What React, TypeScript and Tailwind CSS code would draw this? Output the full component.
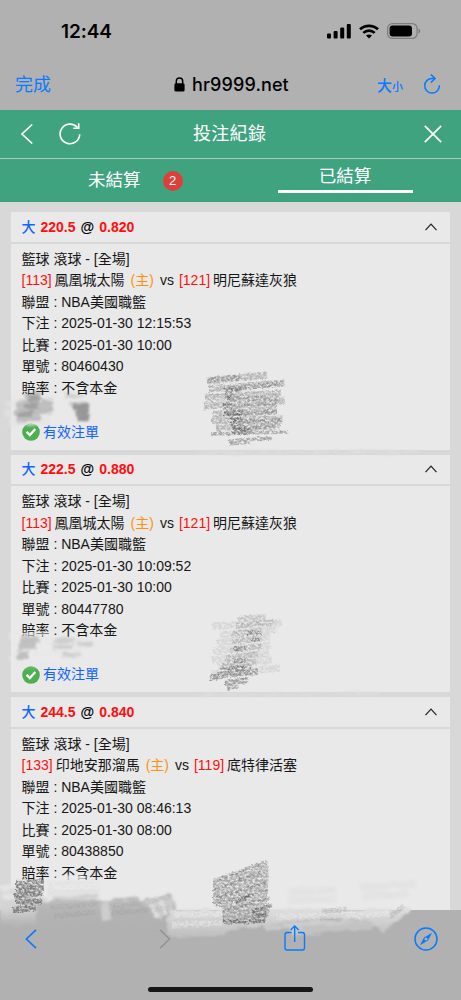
import React from "react";

const bets = [
  {
    line: "220.5",
    odds: "0.820",
    homeNo: "[113]",
    home: "鳳凰城太陽",
    awayNo: "[121]",
    away: "明尼蘇達灰狼",
    placed: "2025-01-30 12:15:53",
    start: "2025-01-30 10:00",
    ticket: "80460430",
    status: "有效注單",
  },
  {
    line: "222.5",
    odds: "0.880",
    homeNo: "[113]",
    home: "鳳凰城太陽",
    awayNo: "[121]",
    away: "明尼蘇達灰狼",
    placed: "2025-01-30 10:09:52",
    start: "2025-01-30 10:00",
    ticket: "80447780",
    status: "有效注單",
  },
  {
    line: "244.5",
    odds: "0.840",
    homeNo: "[133]",
    home: "印地安那溜馬",
    awayNo: "[119]",
    away: "底特律活塞",
    placed: "2025-01-30 08:46:13",
    start: "2025-01-30 08:00",
    ticket: "80438850",
    status: "",
  },
];

function StatusBar() {
  return (
    <div className="flex h-[62px] items-center justify-between pl-[61px] pr-[40px] font-['Inter','Liberation_Sans',sans-serif]">
      <span className="text-[19px] font-semibold leading-none tracking-[-0.1px]">12:44</span>
      <div className="flex items-center gap-2">
        <svg width="24" height="15" viewBox="0 0 24 15">
          <rect x="0" y="9.5" width="4" height="5" rx="1" />
          <rect x="6.6" y="7" width="4" height="7.5" rx="1" />
          <rect x="13.2" y="3.5" width="4" height="11" rx="1" />
          <rect x="19.8" y="0" width="4" height="14.5" rx="1" />
        </svg>
        <svg width="20" height="15" viewBox="0 0 20 15" fill="none" stroke="black">
          <path d="M1 5.3C6 .6 14 .6 19 5.3" strokeWidth="2.7" />
          <path d="M4.3 8.9C7.6 5.8 12.4 5.8 15.7 8.9" strokeWidth="2.6" />
          <path d="M10 14.6L7 11.6C8.7 10 11.3 10 13 11.6Z" fill="black" stroke="none" />
        </svg>
        <svg width="34" height="16" viewBox="0 0 34 16">
          <rect x=".6" y=".6" width="29.5" height="14.8" rx="4.8" fill="none" stroke="#7d7d7d" strokeWidth="1.2" />
          <rect x="2.6" y="2.6" width="22.4" height="10.8" rx="3" />
          <path d="M31.5 5.5Q33.3 6 33.3 8T31.5 10.5Z" fill="#7d7d7d" />
        </svg>
      </div>
    </div>
  );
}

function AddressBar() {
  return (
    <div className="flex h-12 items-center pb-[3px] pl-[15px] pr-[20px] font-['Inter','Noto_Sans_CJK_TC',sans-serif] text-[#0a7aff]">
      <span className="w-[159px] text-[18px] leading-none">完成</span>
      <div className="flex flex-1 items-center gap-[7px] text-black">
        <svg width="11" height="15" viewBox="0 0 11 15">
          <path d="M2.3 7V4.3a3.2 3.2 0 0 1 6.4 0V7" fill="none" stroke="black" strokeWidth="1.5" />
          <rect x=".4" y="6.3" width="10.2" height="8.2" rx="1.5" />
        </svg>
        <span className="text-[18px] font-medium leading-none tracking-[0.12px]">hr9999.net</span>
      </div>
      <div className="flex items-center gap-[20px]">
        <span className="whitespace-nowrap font-medium leading-none">
          <span className="text-[15px]">大</span>
          <span className="text-[11px]">小</span>
        </span>
        <svg className="mb-[2px]" width="18" height="20" viewBox="0 0 18 20" fill="none" stroke="currentColor" strokeWidth="1.5" strokeLinecap="round" strokeLinejoin="round">
          <path d="M11.8 4.5H9A7.3 7.3 0 1 0 16.3 11.7" />
          <path d="M8.3 .9L12 4.5L8.3 8.1" />
        </svg>
      </div>
    </div>
  );
}

function TitleBar() {
  return (
    <div className="flex h-[49px] items-center border-b border-[#a5cdbd] bg-[#40a380] pl-[21px] pr-[19px] text-white">
      <div className="flex w-[172px] items-center gap-[26px]">
        <svg width="12" height="20" viewBox="0 0 12 20" fill="none" stroke="white" strokeWidth="1.6">
          <path d="M11.2 .5L1 10L11.2 19.5" />
        </svg>
        <svg width="22" height="22" viewBox="0 0 22 22" fill="none" stroke="white" strokeWidth="1.6">
          <path d="M20.7 11.2A9.8 9.8 0 1 1 18.4 4.6" />
          <path d="M19.7 .3V5.2H14.3" />
        </svg>
      </div>
      <h1 className="flex-1 text-[18px] leading-none tracking-[0.3px]">投注紀錄</h1>
      <svg width="18" height="18" viewBox="0 0 18 18" stroke="white" strokeWidth="1.7">
        <path d="M.8 .8L17.2 17.2M17.2 .8L.8 17.2" />
      </svg>
    </div>
  );
}

function Tabs() {
  return (
    <div className="flex h-[43px] bg-[#40a380] text-[17.5px] leading-none text-white">
      <div className="flex w-[230px] items-center pl-[88px]">
        <span>未結算</span>
        <span className="ml-[22px] flex h-5 w-5 items-center justify-center rounded-full bg-[#dc403a] text-[13px]">
          2
        </span>
      </div>
      <div className="flex flex-1 justify-center pr-[1px]">
        <div className="h-[34px] w-[135px] border-b-[3px] border-white pt-[9px] text-center">已結算</div>
      </div>
    </div>
  );
}

function Row({ label, value }: { label: string; value: string }) {
  return (
    <p>
      {label} : {value}
    </p>
  );
}

function BetCard({ bet }: { bet: (typeof bets)[number] }) {
  return (
    <div className="h-[237.5px] shrink-0 bg-[#e9e9e9]">
      <div className="flex h-[31.5px] items-center justify-between border-b-2 border-[#d8d8d8] pl-[10.5px] pr-[13px] text-[14px] font-bold">
        <div className="flex items-center whitespace-pre leading-none">
          <span className="w-[19px] font-medium text-[#1064ff]">大</span>
          <span className="text-[#ff0d0d]">{bet.line}</span>
          <span className="mx-[5px]">@</span>
          <span className="text-[#ff0d0d]">{bet.odds}</span>
        </div>
        <svg width="12" height="8" viewBox="0 0 12 8" fill="none" stroke="#222" strokeWidth="1.2">
          <path d="M.5 7.2L6 1.2L11.5 7.2" />
        </svg>
      </div>
      <div className="pl-[10.5px] pt-[5px] text-[14px] leading-[21.5px] text-[#161616]">
        <p>籃球 滾球 - [全場]</p>
        <p className="whitespace-nowrap">
          <span className="mr-[3px] text-[#ff1010]">{bet.homeNo}</span>
          {bet.home}
          <span className="mx-[6px] text-[#ff920d]">(主)</span>
          vs
          <span className="ml-[5px] mr-[3px] text-[#ff1010]">{bet.awayNo}</span>
          {bet.away}
        </p>
        <Row label="聯盟" value="NBA美國職籃" />
        <Row label="下注" value={bet.placed} />
        <Row label="比賽" value={bet.start} />
        <Row label="單號" value={bet.ticket} />
        <Row label="賠率" value="不含本金" />
        {bet.status && (
          <div className="mt-[22.5px] flex items-center gap-[3.5px] text-[#1064ff]">
            <svg width="18" height="18" viewBox="0 0 18 18">
              <circle cx="9" cy="9" r="8.8" fill="#4caf50" />
              <path d="M4.6 8.9L7.8 12L13.3 5.9" fill="none" stroke="white" strokeWidth="2.3" />
            </svg>
            <span>{bet.status}</span>
          </div>
        )}
      </div>
    </div>
  );
}

function BottomBar() {
  return (
    <div className="relative z-20 flex h-[90px] shrink-0 flex-col items-center justify-between pb-[8px] pt-[15px]">
      <div className="flex w-full items-center pl-[25px] pr-[23px] text-[#0a7aff]">
        <svg width="12" height="20" viewBox="0 0 12 20" fill="none" stroke="currentColor" strokeWidth="1.7">
          <path d="M11 .8L1.4 10L11 19.2" />
        </svg>
        <svg className="ml-[122px]" width="12" height="20" viewBox="0 0 12 20" fill="none" stroke="#919191" strokeWidth="1.4">
          <path d="M1 .8L10.6 10L1 19.2" />
        </svg>
        <svg className="mb-[2px] ml-[113px]" width="22" height="26" viewBox="0 0 22 26" fill="none" stroke="currentColor" strokeWidth="1.4">
          <path d="M7.5 7.5H3.2Q1 7.5 1 9.7V22.8Q1 25 3.2 25H18.3Q20.5 25 20.5 22.8V9.7Q20.5 7.5 18.3 7.5H14" />
          <path d="M10.7 17V1.2M6.7 5L10.7 1L14.7 5" />
        </svg>
        <svg className="ml-auto" width="24" height="24" viewBox="0 0 24 24">
          <circle cx="12" cy="12" r="11" fill="none" stroke="currentColor" strokeWidth="1.5" />
          <path fillRule="evenodd" fill="currentColor" d="M18.1 5.8L14 13.6L5.9 18.2L10 10.4ZM12 10.5A1.5 1.5 0 1 0 12 13.5A1.5 1.5 0 1 0 12 10.5Z" />
        </svg>
      </div>
      <div className="h-[5px] w-[165px] rounded-full bg-[#161616]" />
    </div>
  );
}

// Pencil marks covering the stake rows and the edge of the toolbar
function PencilMarks() {
  return (
    <svg className="pointer-events-none absolute inset-0 z-10" width="461" height="1000" viewBox="0 0 461 1000" fill="none">
      <defs>
        <filter id="pencil" filterUnits="userSpaceOnUse" x="0" y="360" width="461" height="600" colorInterpolationFilters="sRGB">
          <feTurbulence type="fractalNoise" baseFrequency="0.36 0.5" numOctaves="3" seed="7" result="grain" />
          <feColorMatrix in="grain" type="matrix" values="0 0 0 0 0  0 0 0 0 0  0 0 0 0 0  2.6 0 0 0 -0.65" result="mask" />
          <feDisplacementMap in="SourceGraphic" in2="grain" scale="4" xChannelSelector="R" yChannelSelector="G" result="rough" />
          <feComposite in="rough" in2="mask" operator="in" />
          <feGaussianBlur stdDeviation="0.55" />
        </filter>
        <filter id="smudge" filterUnits="userSpaceOnUse" x="0" y="360" width="461" height="600" colorInterpolationFilters="sRGB">
          <feTurbulence type="fractalNoise" baseFrequency="0.08 0.35" numOctaves="3" seed="12" result="grain" />
          <feDisplacementMap in="SourceGraphic" in2="grain" scale="7" xChannelSelector="R" yChannelSelector="A" />
          <feGaussianBlur stdDeviation="1.1 0.8" />
        </filter>
        <linearGradient id="fadeLeft" x1="0" y1="888" x2="0" y2="926" gradientUnits="userSpaceOnUse">
          <stop stopColor="#d9d9d9" />
          <stop offset=".55" stopColor="#d2d2d2" />
          <stop offset="1" stopColor="#b1b1b1" />
        </linearGradient>
        <linearGradient id="fadeGray" x1="0" y1="896" x2="0" y2="925" gradientUnits="userSpaceOnUse">
          <stop stopColor="#c2c2c2" />
          <stop offset=".5" stopColor="#b4b4b4" />
          <stop offset="1" stopColor="#b1b1b1" />
        </linearGradient>
        <linearGradient id="fadeRight" x1="0" y1="904" x2="0" y2="938" gradientUnits="userSpaceOnUse">
          <stop stopColor="#e6e6e6" />
          <stop offset=".35" stopColor="#d6d6d6" />
          <stop offset="1" stopColor="#bdbdbd" />
        </linearGradient>
      </defs>

      {/* first card */}
      <g filter="url(#smudge)">
        <path d="M6 404L52 400M4 414L52 411M8 423L50 421" stroke="#e4e4e4" strokeWidth="7" opacity=".65" />
        <path d="M25 397L41 396M16 405L53 403M14 412L53 410M17 419L40 418" stroke="#858585" strokeWidth="7" opacity=".42" />
        <path d="M28 399L40 398M24 406L38 406M18 415L32 414" stroke="#777" strokeWidth="6" opacity=".4" />
        <path d="M66 397L84 396M68 404L88 403" stroke="#aaa" strokeWidth="4" opacity=".4" />
        <path d="M72 407L89 406M76 412L89 411M78 418L89 417" stroke="#606060" strokeWidth="6" opacity=".6" />
        <path d="M194 453L420 452" stroke="#dedede" strokeWidth="2.5" />
      </g>
      <g filter="url(#pencil)">
        <path d="M207 381L267 375M209 389L285 383M205 398L281 393M204 406L285 401M213 414L277 410M212 421L283 419M216 428L281 424" stroke="#7f7f7f" strokeWidth="7" opacity=".5" />
        <path d="M211 434L288 432M229 441L272 438M229 444L250 442" stroke="#7f7f7f" strokeWidth="3.5" opacity=".65" />
        <path d="M207 380L240 377M224 390L284 383M225 399L280 398M224 408L277 404M224 415L277 412M231 421L281 421M232 430L276 427" stroke="#707070" strokeWidth="5" opacity=".45" />
        <path d="M225 391L242 389M226 398L234 397M224 405L232 405M224 413L244 413M231 420L242 420M232 427L246 427M233 432L252 431" stroke="#4d4d4d" strokeWidth="5.5" opacity=".5" />
      </g>

      {/* second card */}
      <g filter="url(#smudge)">
        <path d="M9 637L50 635M12 649L50 647M9 660L61 659" stroke="#ebebeb" strokeWidth="6" opacity=".6" />
        <path d="M20 640L39 639M18 647L36 646M17 656L29 655" stroke="#888" strokeWidth="7" opacity=".42" />
        <path d="M54 641L75 640M53 648L72 647M62 655L81 654M77 644L94 643" stroke="#ababab" strokeWidth="5" opacity=".42" />
        <path d="M190 695L380 694" stroke="#dddddd" strokeWidth="2.5" />
        <path d="M22 668L38 667" stroke="#e9e9e9" strokeWidth="3" opacity=".4" />
      </g>
      <g filter="url(#pencil)">
        <path d="M212 626L282 623M220 635L277 629M217 643L270 637M213 651L271 645M212 660L269 653M218 666L272 660M211 674L280 668" stroke="#9c9c9c" strokeWidth="7" opacity=".25" />
        <path d="M238 619L266 617M236 626L274 622M232 634L262 631M232 642L262 638M230 650L262 646M226 658L258 654M222 665L256 661" stroke="#7c7c7c" strokeWidth="6" opacity=".33" />
        <path d="M248 633L262 633M252 640L260 640M234 649L246 648M234 661L246 660M229 668L246 667" stroke="#555" strokeWidth="4" opacity=".45" />
        <path d="M210 678L230 674L258 672M225 683L248 680M227 687L238 685M220 671L252 668" stroke="#5c5c5c" strokeWidth="6" opacity=".55" />
      </g>

      {/* third card and the toolbar edge */}
      <g filter="url(#smudge)">
        <path d="M0 890L30 884L48 900L40 924L0 926Z" fill="url(#fadeLeft)" />
        <path d="M0 888L18 886M2 897L16 896" stroke="#e4e4e4" strokeWidth="6" opacity=".9" />
        <path d="M36 904L60 899L100 900L148 899L176 902L176 928L36 930Z" fill="url(#fadeGray)" />
        <path d="M48 886L99 884M48 893L99 891" stroke="#e2e2e2" strokeWidth="7" />
        <path d="M52 899L98 896" stroke="#d0d0d0" strokeWidth="4" />
        <path d="M101 901L108 901L112 919L102 921Z" fill="#cdcdcd" />
        <path d="M110 903L140 900" stroke="#bcbcbc" strokeWidth="6" />
        <path d="M145 902L171 893L175 906L160 920Z" fill="#cbcbcb" />
        <path d="M150 904L158 918M160 900L167 914" stroke="#dedede" strokeWidth="4" />
        <path d="M172 909L226 909L226 936L170 937L166 922Z" fill="url(#fadeRight)" />
        <path d="M226 909L300 909L300 918L266 932L264 926L242 928L226 931Z" fill="url(#fadeRight)" />
        <path d="M268 909L412 909L384 932L374 926L350 930L292 936L290 928L268 930Z" fill="url(#fadeRight)" />
        <path d="M302 930L372 926" stroke="#c2c2c2" strokeWidth="6" />
        <path d="M272 925L320 918L372 922" stroke="#bdbdbd" strokeWidth="2" />
        <path d="M56 878H86" stroke="#ececec" strokeWidth="4" opacity=".75" />
        <path d="M360 887L416 884M362 896L408 894M290 892L336 890M288 900L336 899" stroke="#e0e0e0" strokeWidth="7" opacity=".6" />
      </g>
      <g filter="url(#pencil)">
        <path d="M16 883L44 882M16 889L44 888M14 896L43 893M16 902L42 901M13 910L36 908" stroke="#5a5a5a" strokeWidth="6" opacity=".7" />
        <path d="M213 881L267 861L269 870L267 903L270 911L264 922L223 923L223 908L213 905Z" fill="#808080" opacity=".6" />
        <path d="M213 881L267 861M215 890L262 872M214 899L266 882M216 905L268 890M222 912L270 898" stroke="#777" strokeWidth="3" opacity=".5" />
        <path d="M223 922L266 921M252 912L272 905M252 917L268 914M236 902L250 896" stroke="#525252" strokeWidth="4" opacity=".6" />
        <path d="M112 906L141 904M112 913L148 910M50 907L98 904M54 916L96 912M148 902L171 896M154 910L169 908" stroke="#8c8c8c" strokeWidth="5" opacity=".22" />
        <path d="M322 912L347 909M320 919L346 916M390 917L404 906" stroke="#909090" strokeWidth="5" opacity=".35" />
        <path d="M52 887L98 886M174 915L222 914M172 925L222 923M277 917L390 914" stroke="#f2f2f2" strokeWidth="6" opacity=".5" />
      </g>
    </svg>
  );
}

export default function App() {
  return (
    <div className="relative flex h-[1000px] w-[461px] flex-col overflow-hidden bg-[#b1b1b1] font-['Liberation_Sans','Noto_Sans_CJK_TC',sans-serif] text-black">
      <div className="h-[110px] shrink-0">
        <StatusBar />
        <AddressBar />
      </div>
      <TitleBar />
      <Tabs />
      <main className="flex min-h-0 flex-1 flex-col gap-[5px] overflow-hidden bg-[#d8d8d8] px-[11px] pt-[10px]">
        {bets.map((bet) => (
          <BetCard key={bet.ticket} bet={bet} />
        ))}
      </main>
      <BottomBar />
      <PencilMarks />
    </div>
  );
}
